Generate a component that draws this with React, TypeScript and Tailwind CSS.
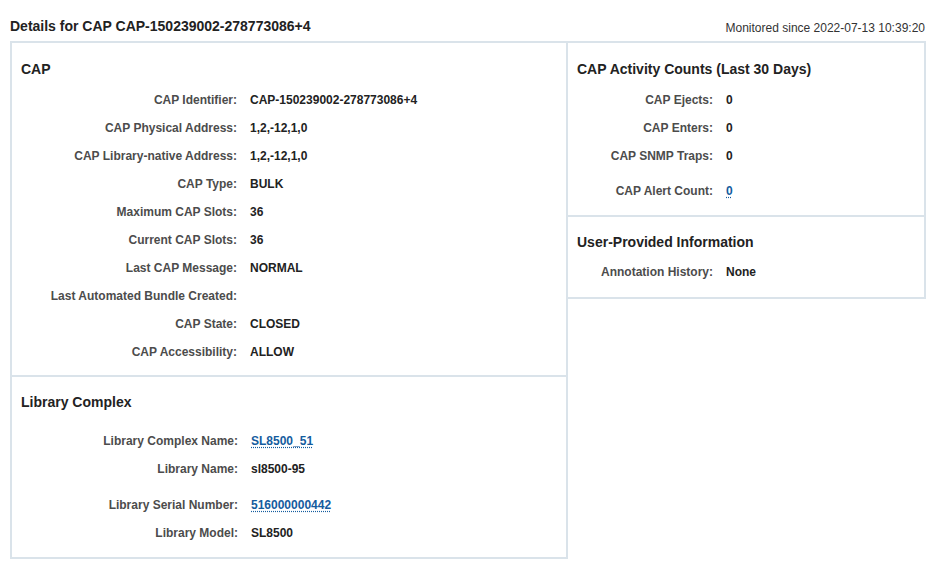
type Row = { label: string; value?: string; link?: boolean };

const capRows: Row[] = [
  { label: "CAP Identifier:", value: "CAP-150239002-278773086+4" },
  { label: "CAP Physical Address:", value: "1,2,-12,1,0" },
  { label: "CAP Library-native Address:", value: "1,2,-12,1,0" },
  { label: "CAP Type:", value: "BULK" },
  { label: "Maximum CAP Slots:", value: "36" },
  { label: "Current CAP Slots:", value: "36" },
  { label: "Last CAP Message:", value: "NORMAL" },
  { label: "Last Automated Bundle Created:", value: "" },
  { label: "CAP State:", value: "CLOSED" },
  { label: "CAP Accessibility:", value: "ALLOW" },
];

const libRows: Row[] = [
  { label: "Library Complex Name:", value: "SL8500_51", link: true },
  { label: "Library Name:", value: "sl8500-95" },
  { label: "Library Serial Number:", value: "516000000442", link: true },
  { label: "Library Model:", value: "SL8500" },
];

const activityRows: Row[] = [
  { label: "CAP Ejects:", value: "0" },
  { label: "CAP Enters:", value: "0" },
  { label: "CAP SNMP Traps:", value: "0" },
  { label: "CAP Alert Count:", value: "0", link: true },
];

function Rows({ rows, labelW, gap, linkH = "h-[35px]" }: { rows: Row[]; labelW: string; gap: string; linkH?: string }) {
  return (
    <div>
      {rows.map((r) => (
        <div key={r.label} className={`flex items-end ${r.link ? linkH : "h-[28px]"} pb-[6px]`}>
          <div className={`${labelW} shrink-0 text-right font-bold text-[#4c4c4c]`}>{r.label}</div>
          <div className={`${gap} font-bold text-[#222]`}>
            {r.link ? (
              <a href="#" className="text-[#145c9e] underline decoration-[#145c9e] decoration-dotted underline-offset-2">
                {r.value}
              </a>
            ) : (
              r.value
            )}
          </div>
        </div>
      ))}
    </div>
  );
}

export default function App() {
  return (
    <div className="min-h-screen bg-white pl-[10px] pr-px pt-[16px] text-[12px] text-[#333]" style={{ fontFamily: '"Liberation Sans", Arial, sans-serif' }}>
      <div className="flex items-end justify-between">
        <h1 className="text-[14px] font-bold text-[#222]">Details for CAP CAP-150239002-278773086+4</h1>
        <div className="text-[12px] text-[#333]">Monitored since 2022-07-13 10:39:20</div>
      </div>
      <div className="mt-[4px] flex items-start">
        <div className="w-[558px] shrink-0 border-2 border-[#dae3ea]">
          <section className="h-[332px] px-[9px] pt-[16px]">
            <h2 className="text-[14px] font-bold text-[#222]">CAP</h2>
            <div className="-ml-[9px] mt-[7px]">
              <Rows rows={capRows} labelW="w-[225px]" gap="pl-[13px]" />
            </div>
          </section>
          <section className="border-t-2 border-[#dae3ea] px-[9px] pt-[15px] pb-[9px]">
            <h2 className="text-[14px] font-bold text-[#222]">Library Complex</h2>
            <div className="-ml-[9px] mt-[7px]">
              <Rows rows={libRows} labelW="w-[226px]" gap="pl-[13px]" linkH="h-[36px]" />
            </div>
          </section>
        </div>
        <div className="-ml-[2px] w-[360px] shrink-0 border-2 border-[#dae3ea]">
          <section className="h-[172px] px-[9px] pt-[16px]">
            <h2 className="text-[14px] font-bold text-[#222]">CAP Activity Counts (Last 30 Days)</h2>
            <div className="-ml-[9px] mt-[7px]">
              <Rows rows={activityRows} labelW="w-[145px]" gap="pl-[13px]" />
            </div>
          </section>
          <section className="h-[82px] border-t-2 border-[#dae3ea] px-[9px] pt-[15px]">
            <h2 className="text-[14px] font-bold text-[#222]">User-Provided Information</h2>
            <div className="-ml-[9px] mt-[6px]">
              <Rows rows={[{ label: "Annotation History:", value: "None" }]} labelW="w-[145px]" gap="pl-[13px]" />
            </div>
          </section>
        </div>
      </div>
    </div>
  );
}
